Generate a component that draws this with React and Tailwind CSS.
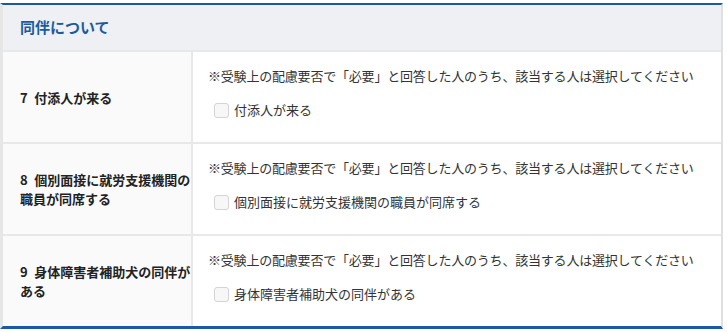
import React from 'react'

const NOTE = '※受験上の配慮要否で「必要」と回答した人のうち、該当する人は選択してください'

const rows = [
    { no: '7', label: '付添人が来る', option: '付添人が来る' },
    { no: '8', label: '個別面接に就労支援機関の職員が同席する', option: '個別面接に就労支援機関の職員が同席する' },
    { no: '9', label: '身体障害者補助犬の同伴がある', option: '身体障害者補助犬の同伴がある' },
]

const Row = ({ no, label, option }) => (
    <div className="flex border-t-2 border-[#e8e8e8]">
        <div className="w-[188px] shrink-0 flex items-center bg-[#fafafa] pl-[17px] pr-0 text-[13px] font-bold leading-[19px] text-[#222]">
            <p>{`${no}\u2002${label}`}</p>
        </div>
        <div className="flex-1 border-l-2 border-[#e8e8e8] bg-white pl-[15px] pt-[15px] pb-[22px] text-[13px] leading-[18px] text-[#333]">
            <p className="tracking-[-0.2px]">{NOTE}</p>
            <label className="mt-[15px] ml-[6px] flex items-center gap-[5px] leading-[20px]">
                <span className="h-[15px] w-[15px] rounded-[3px] border border-[#d4d4d4] bg-[#f7f7f7]"></span>
                <span>{option}</span>
            </label>
        </div>
    </div>
)

export default function App() {
    return (
        <div className="bg-white pt-[3px] w-[727px] h-[332px]" style={{ fontFamily: '"Noto Sans CJK JP", "Noto Sans", sans-serif' }}>
            <div className="w-[723px] border-t-2 border-t-[#1d5a98] border-l-[3px] border-r-2 border-l-[#e6e6e6] border-r-[#e0e0e0] border-b-[3px] border-b-[#1a58a8]">
                <div className="h-[45px] flex items-center bg-[#eef0f3] pl-[17px] text-[15px] font-bold text-[#1b5a9e]">
                    同伴について
                </div>
                {rows.map((r) => (
                    <Row key={r.no} {...r} />
                ))}
            </div>
        </div>
    )
}
